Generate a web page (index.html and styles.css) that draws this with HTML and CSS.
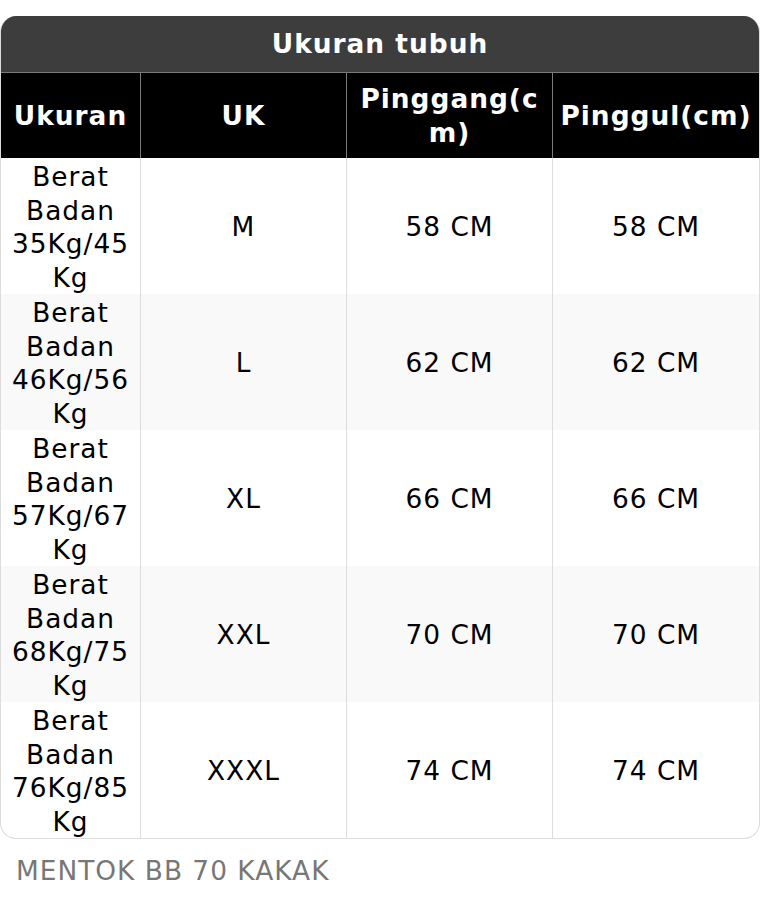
FILE: index.html
```html
<!DOCTYPE html>
<html lang="id">
<head>
<meta charset="utf-8">
<title>Ukuran tubuh</title>
<link rel="stylesheet" href="styles.css">
</head>
<body>
<div class="card">
  <table class="size-table">
    <colgroup>
      <col class="c1"><col class="c2"><col class="c3"><col class="c4">
    </colgroup>
    <thead>
      <tr><th class="title" colspan="4">Ukuran tubuh</th></tr>
      <tr class="head">
        <th>Ukuran</th><th>UK</th><th>Pinggang(cm)</th><th>Pinggul(cm)</th>
      </tr>
    </thead>
    <tbody>
      <tr><td>Berat Badan 35Kg/45Kg</td><td>M</td><td>58 CM</td><td>58 CM</td></tr>
      <tr><td>Berat Badan 46Kg/56Kg</td><td>L</td><td>62 CM</td><td>62 CM</td></tr>
      <tr><td>Berat Badan 57Kg/67Kg</td><td>XL</td><td>66 CM</td><td>66 CM</td></tr>
      <tr><td>Berat Badan 68Kg/75Kg</td><td>XXL</td><td>70 CM</td><td>70 CM</td></tr>
      <tr><td>Berat Badan 76Kg/85Kg</td><td>XXXL</td><td>74 CM</td><td>74 CM</td></tr>
    </tbody>
  </table>
</div>
<p class="note">MENTOK BB 70 KAKAK</p>
</body>
</html>
```
FILE: styles.css
```css
html, body {
  margin: 0;
  padding: 0;
  background: #fff;
}
body {
  font-family: "DejaVu Sans", "Liberation Sans", sans-serif;
  font-size: 26.4px;
  letter-spacing: 1px;
  line-height: 33.5px;
  color: #000;
}
.card {
  margin-top: 16px;
  width: 760px;
  box-sizing: border-box;
  border: 1px solid #dcdcdc;
  border-top: 0;
  border-radius: 16px;
  overflow: hidden;
}
.size-table {
  width: 100%;
  table-layout: fixed;
  border-collapse: separate;
  border-spacing: 0;
}
.c1 { width: 139px; }
.c2 { width: 206px; }
.c3 { width: 206px; }
.c4 { width: 207px; }
.size-table th,
.size-table td {
  text-align: center;
  vertical-align: middle;
  overflow-wrap: anywhere;
  padding: 2px 8px 0;
}
.title {
  background: #3d3d3d;
  color: #fff;
  font-weight: bold;
  line-height: 34px;
  padding: 11px 8px 11px !important;
}
.head th {
  background: #000;
  color: #fff;
  font-weight: bold;
  border-top: 1px solid #7a7a7a;
  padding: 9px 4px 9px;
}
.head th + th {
  border-left: 1px solid #7a7a7a;
}
.size-table tbody td + td {
  border-left: 1px solid #dddddd;
}
.size-table tbody tr:nth-child(even) td {
  background: #f9f9f9;
}
.note {
  margin: 15px 0 0;
  padding: 0 16px;
  color: #777;
}
```
